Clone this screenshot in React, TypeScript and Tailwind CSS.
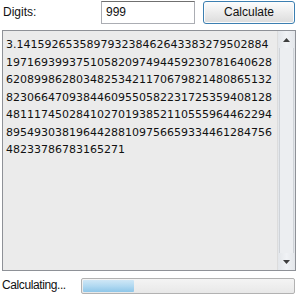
import React from 'react';

const DIGITS = [
  '3.141592653589793238462643383279502884',
  '19716939937510582097494459230781640628',
  '62089986280348253421170679821480865132',
  '82306647093844609550582231725359408128',
  '48111745028410270193852110555964462294',
  '89549303819644288109756659334461284756',
  '48233786783165271',
];

export default function App() {
  return (
    <div className="w-[302px] h-[299px] bg-white text-[#111] font-['Liberation_Sans',sans-serif] text-[12px] overflow-hidden">
      {/* top row */}
      <div className="flex h-[30px]">
        <div className="w-[101px] pl-[3px] pt-[5px] leading-[15px]">Digits:</div>
        <div className="w-[94px] h-[23px] mt-[1px] border border-[#abadb3] border-t-[#707070] bg-white pl-[4px] pt-[3px] leading-[15px]">
          999
        </div>
        <button className="ml-[8px] w-[92px] h-[23px] mt-[1px] rounded-[3px] border border-[#3c7fb1] bg-gradient-to-b from-[#fdfdfd] via-[#ececec] to-[#dcdcdc] leading-[15px] shadow-[inset_0_0_0_1px_#fcfcfc]">
          Calculate
        </button>
      </div>

      {/* output */}
      <div className="ml-[2px] w-[294px] h-[241px] border border-[#8e9197] bg-[#ebebeb] flex">
        <div className="flex-1 pl-[3px] pt-[5px] font-['DejaVu_Sans',sans-serif] text-[11px] leading-[17.5px] text-[#111]">
          {DIGITS.map((d, i) => (
            <div key={i}>{d}</div>
          ))}
        </div>
        <div className="w-[18px] flex flex-col border-l border-[#dcdcdc] bg-gradient-to-r from-[#e3e6ea] via-[#f0f2f5] to-[#e3e6ea]">
          <div className="h-[17px] flex items-center justify-center">
            <svg width="7" height="4" viewBox="0 0 7 4"><path d="M3.5 0L7 4H0z" fill="#3e3e3e" /></svg>
          </div>
          <div className="flex-1 mx-[1px] border-x border-[#cfd3d8] bg-[#eceef1]" />
          <div className="h-[17px] flex items-center justify-center">
            <svg width="7" height="4" viewBox="0 0 7 4"><path d="M0 0h7L3.5 4z" fill="#3e3e3e" /></svg>
          </div>
        </div>
      </div>

      {/* status row */}
      <div className="flex items-center mt-[6px] h-[17px]">
        <div className="w-[81px] pl-[2px] leading-[15px] tracking-[-0.4px]">Calculating...</div>
        <div className="w-[214px] h-[16px] rounded-[2px] border border-[#b2b2b2] bg-gradient-to-b from-[#f4f4f4] to-[#e8e8e8] p-[1px]">
          <div className="w-[51px] h-full rounded-[1px] bg-gradient-to-b from-[#cfe7f6] via-[#b1d9f1] to-[#8ec6e8]" />
        </div>
      </div>
    </div>
  );
}
